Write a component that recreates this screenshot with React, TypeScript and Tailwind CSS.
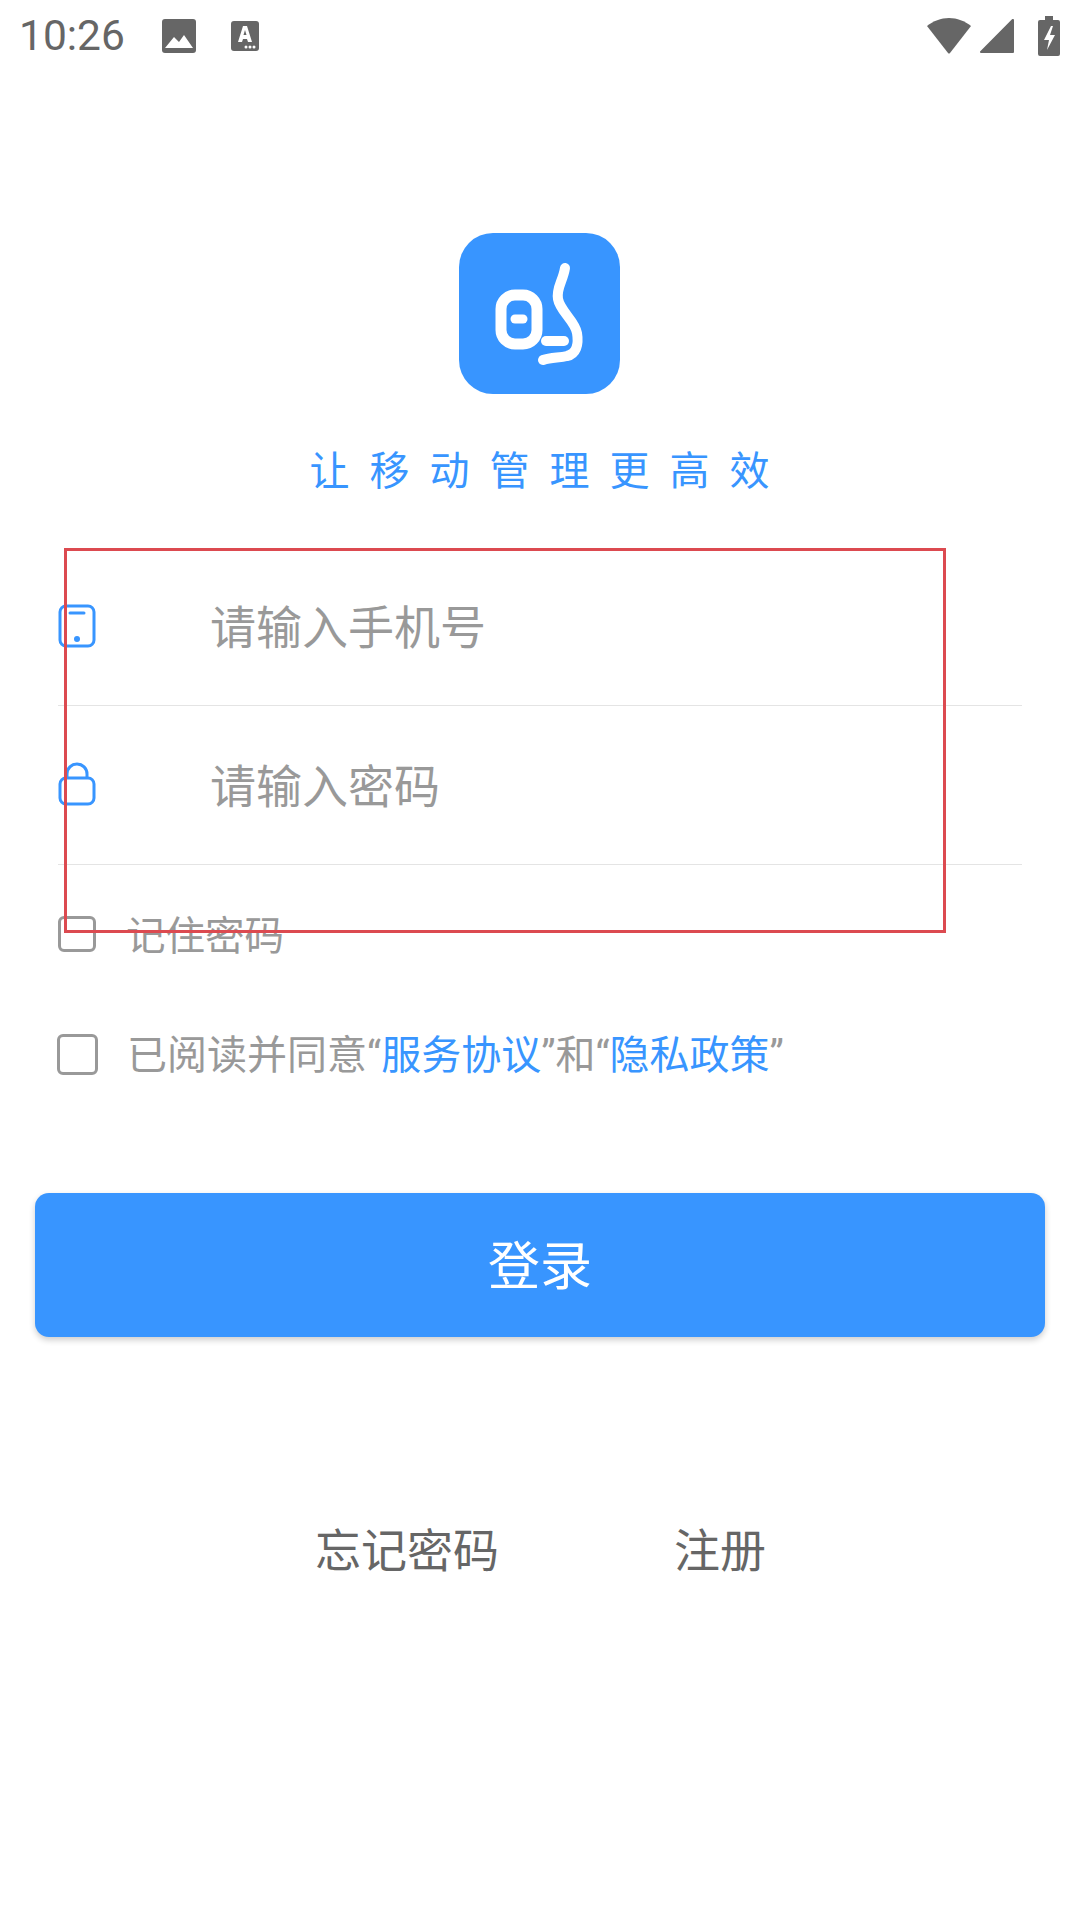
import React from 'react';

const Logo = () => (
    <div className="mr-[2px] w-[161px] h-[161px] rounded-[34px] bg-[#3895ff] flex items-center justify-center">
        <svg width="161" height="161" viewBox="0 0 161 161" fill="none" stroke="#fff" strokeLinecap="round" strokeLinejoin="round">
            <rect x="42" y="62" width="36" height="49" rx="14" strokeWidth="11" />
            <path d="M56 86h8" strokeWidth="9" />
            <path d="M87 108h18" strokeWidth="10" />
            <path d="M106 35C104 48 97 55 99 66C101 78 116 88 118 100C120 112 117 121 108 123C100 125 92 124 84 127" strokeWidth="10" />
        </svg>
    </div>
);

const PhoneIcon = () => (
    <svg width="38" height="44" viewBox="0 0 38 44" fill="none" stroke="#3895ff" strokeWidth="3">
        <rect x="2" y="2" width="34" height="40" rx="6" />
        <path d="M12 9h14" strokeLinecap="round" />
        <circle cx="19" cy="35" r="3" fill="#3895ff" stroke="none" />
    </svg>
);

const LockIcon = () => (
    <svg className="-mt-[2px]" width="38" height="44" viewBox="0 0 38 44" fill="none" stroke="#3895ff" strokeWidth="3">
        <rect x="2" y="16" width="34" height="26" rx="6" />
        <path d="M9 16v-4a10 10 0 0 1 20 0v4" />
    </svg>
);

const StatusBar = () => (
    <div className="h-[72px] pl-[19px] pr-[20px] flex items-center text-[#666]">
        <span className="w-[106px] text-[42.500px] leading-none font-['Roboto',sans-serif]">10:26</span>
        <svg className="ml-[36px]" width="36" height="36" viewBox="0 0 36 36">
            <rect x="1" y="1" width="34" height="34" rx="3" fill="#666" />
            <path d="M4 30l9-11 5 5 5-7 9 13z" fill="#fff" />
        </svg>
        <svg className="ml-[33px]" width="30" height="32" viewBox="0 0 30 32">
            <rect x="1" y="1" width="28" height="30" rx="3" fill="#666" />
            <path d="M8 22l5-16h4l5 16h-4l-1-3h-4l-1 3zM13.500 15h3l-1.500-5z" fill="#fff" />
            <circle cx="16" cy="27" r="1.5" fill="#fff" />
            <circle cx="20" cy="27" r="1.5" fill="#fff" />
            <circle cx="24" cy="27" r="1.5" fill="#fff" />
        </svg>
        <div className="ml-auto flex items-center">
            <svg width="46" height="38" viewBox="0 0 46 38">
                <path d="M1 9C7 4 15 1 23 1s16 3 22 8L24 36c-.6.7-1.400.7-2 0z" fill="#666" />
            </svg>
            <svg className="ml-[7px]" width="36" height="36" viewBox="0 0 36 36">
                <path d="M35 2v32a1 1 0 0 1-1 1H2c-1 0-1.400-1-.7-1.700L33 1.300C34 .5 35 1 35 2z" fill="#666" />
            </svg>
            <svg className="ml-[23px]" width="22" height="40" viewBox="0 0 22 40">
                <path d="M7 0h8v4h5a2 2 0 0 1 2 2v32a2 2 0 0 1-2 2H2a2 2 0 0 1-2-2V6a2 2 0 0 1 2-2h5z" fill="#666" />
                <path d="M13 10l-7 14h5l-2 10 8-15h-5l3-9z" fill="#fff" />
            </svg>
        </div>
    </div>
);

export default function App() {
    return (
        <div className="relative w-[1080px] h-[1920px] bg-white overflow-hidden font-['Roboto','Noto_Sans_CJK_SC',sans-serif]">
            <StatusBar />

            <div className="flex flex-col items-center pt-[161px]">
                <Logo />
                <div className="mt-[54px] h-[48px] text-[40px] leading-[48px] tracking-[20px] pl-[19px] text-[#3895ff]">让移动管理更高效</div>
            </div>

            <div className="mt-[51px] ml-[58px] w-[964px]">
                <div className="h-[159px] flex items-center border-b-[1.5px] border-[#e4e4e4]">
                    <PhoneIcon />
                    <span className="ml-[114px] pt-[5px] text-[46px] text-[#999]">请输入手机号</span>
                </div>
                <div className="h-[159px] flex items-center border-b-[1.5px] border-[#e4e4e4]">
                    <LockIcon />
                    <span className="ml-[114px] pt-[5px] text-[46px] text-[#999]">请输入密码</span>
                </div>
            </div>

            <div className="mt-[45px] ml-[58px] h-[48px] flex items-center">
                <div className="w-[38px] h-[36px] rounded-[6px] border-[3px] border-[#999]" />
                <span className="ml-[30px] pt-[5px] text-[39.500px] text-[#999]">记住密码</span>
            </div>

            <div className="mt-[72px] ml-[57px] h-[48px] flex items-center">
                <div className="w-[41px] h-[41px] rounded-[6px] border-[3px] border-[#999]" />
                <span className="ml-[29px] pt-[4px] text-[40px] text-[#999] whitespace-nowrap">
                    已阅读并同意“<span className="text-[#3895ff]">服务协议</span>”和“<span className="text-[#3895ff]">隐私政策</span>”
                </span>
            </div>

            <div className="mt-[115px] mx-[35px] h-[144px] rounded-[14px] bg-[#3895ff] shadow-[0_3px_6px_rgba(0,0,0,0.2)] flex items-center justify-center text-white text-[52px]">
                <span className="pt-[6px]">登录</span>
            </div>

            <div className="mt-[180px] flex items-center text-[46px] text-[#666] pl-[315px]">
                <span>忘记密码</span>
                <span className="ml-[175px]">注册</span>
            </div>

            {/* overlay box drawn on top of the screenshot */}
            <div className="absolute left-[64px] top-[548px] w-[882px] h-[385px] border-[3px] border-[#dc4a50]" />
        </div>
    );
}
